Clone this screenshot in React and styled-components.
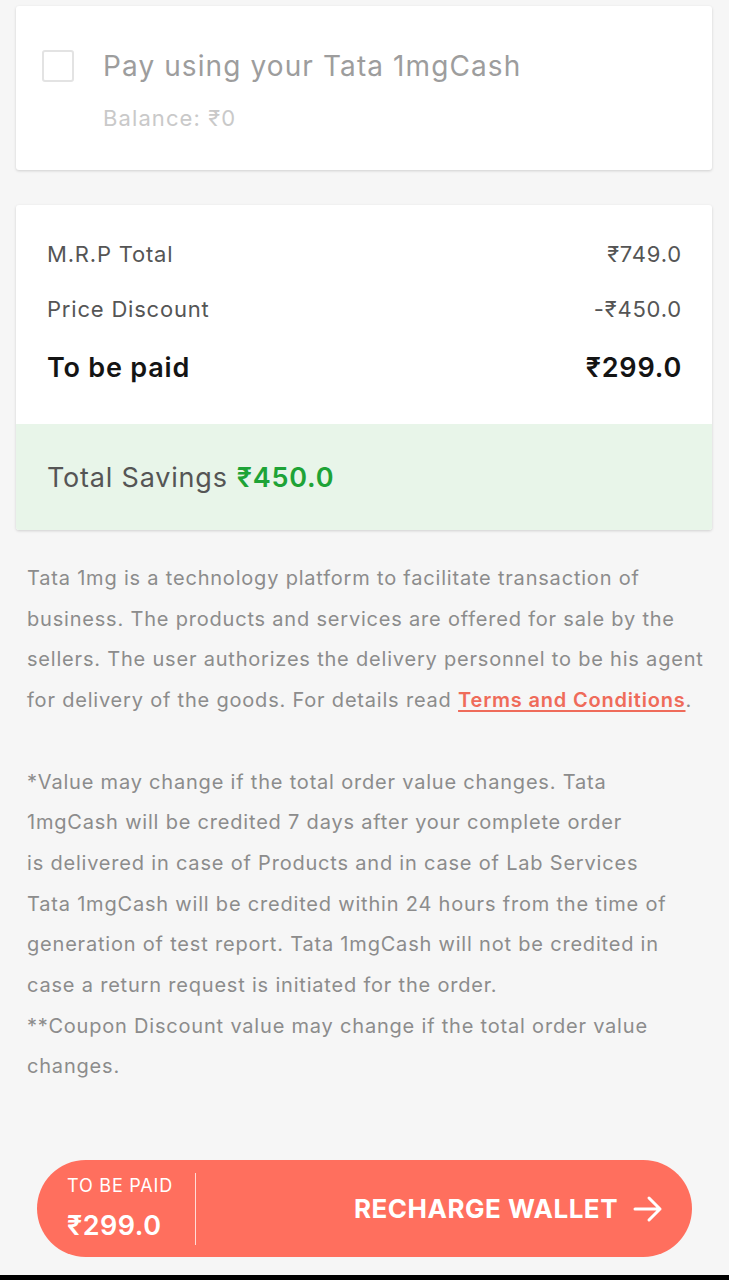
import React from 'react'
import styled, { createGlobalStyle } from 'styled-components'

const GlobalStyle = createGlobalStyle`
  body {
    margin: 0;
    background: #f6f6f6;
    font-family: Inter, "Noto Sans", "DejaVu Sans", sans-serif;
  }
`;

const Page = styled.div`
  height: 1280px;
  display: flex;
  flex-direction: column;
  padding: 6px 17px 0 16px;
  box-sizing: border-box;
  overflow: hidden;
`;

const Card = styled.div`
  background: #fff;
  border-radius: 3px;
  box-shadow: 0 1px 3px rgba(0, 0, 0, 0.16);
  overflow: hidden;
`;

const WalletCard = styled(Card)`
  height: 164px;
  box-sizing: border-box;
  display: flex;
  align-items: flex-start;
  padding: 44px 26px 0;
  gap: 29px;
`;

const Checkbox = styled.div`
  width: 28px;
  height: 28px;
  border: 2px solid #e3e3e3;
  border-radius: 3px;
  flex-shrink: 0;
`;

const WalletText = styled.div`
  display: flex;
  flex-direction: column;
  gap: 22px;
`;

const WalletTitle = styled.div`
  font-size: 28px;
  letter-spacing: 1.1px;
  color: #9d9d9d;
  line-height: 32px;
`;

const Balance = styled.div`
  font-size: 22px;
  letter-spacing: 1.1px;
  color: #c9c9c9;
  line-height: 28px;
`;

const SummaryCard = styled(Card)`
  margin-top: 35px;
`;

const Rows = styled.div`
  padding: 21px 30px 26px 31px;
  display: flex;
  flex-direction: column;
`;

const Row = styled.div`
  display: flex;
  justify-content: space-between;
  align-items: center;
  height: ${({ $strong }) => ($strong ? '62px' : '55px')};
  font-size: ${({ $strong }) => ($strong ? '27px' : '22px')};
  font-weight: ${({ $strong }) => ($strong ? 600 : 400)};
  letter-spacing: 0.8px;
  color: ${({ $strong }) => ($strong ? '#141414' : '#555')};
`;

const Savings = styled.div`
  background: #e8f5e9;
  height: 106px;
  display: flex;
  align-items: center;
  padding-left: 31px;
  font-size: 27px;
  letter-spacing: 0.8px;
  color: #555;
  gap: 9px;
`;

const SavingsAmount = styled.span`
  color: #1ea336;
  font-weight: 600;
`;

const Disclaimer = styled.div`
  margin: 28px 0 0 11px;
  font-size: 20px;
  letter-spacing: 0.8px;
  line-height: 40.7px;
  color: #8c8c8c;
  white-space: nowrap;
`;

const Paragraph = styled.p`
  margin: 0 0 40.7px;
`;

const TermsLink = styled.a`
  color: #ef6b5a;
  font-weight: 600;
  text-decoration: underline;
  text-underline-offset: 3px;
`;

const Footer = styled.div`
  margin-top: auto;
  padding: 0 20px 18px 21px;
`;

const PayButton = styled.button`
  width: 100%;
  height: 97px;
  border: none;
  border-radius: 49px;
  background: #ff6f5e;
  color: #fff;
  display: flex;
  align-items: center;
  padding: 0 28px 0 30px;
  font-family: inherit;
  cursor: pointer;
`;

const PaidBlock = styled.div`
  display: flex;
  flex-direction: column;
  align-items: flex-start;
  gap: 13px;
  padding-right: 22px;
  border-right: 1.5px solid rgba(255, 255, 255, 0.75);
  height: 72px;
  justify-content: center;
`;

const PaidLabel = styled.span`
  font-size: 18px;
  letter-spacing: 0.8px;
`;

const PaidAmount = styled.span`
  font-size: 27px;
  font-weight: 600;
  letter-spacing: 0.5px;
`;

const Action = styled.div`
  flex: 1;
  display: flex;
  justify-content: flex-end;
  align-items: center;
  gap: 14px;
  font-size: 26px;
  font-weight: 700;
  letter-spacing: 0.5px;
`;

const BottomBar = styled.div`
  height: 5px;
  background: #000;
  margin: 0 -17px 0 -16px;
`;

const ArrowIcon = () => (
  <svg width="32" height="28" viewBox="0 0 32 28" fill="none" stroke="#fff" strokeWidth="3" strokeLinecap="round" strokeLinejoin="round">
    <path d="M3 14h25M17 3l11 11-11 11" />
  </svg>
);

const firstPara = [
  'Tata 1mg is a technology platform to facilitate transaction of',
  'business. The products and services are offered for sale by the',
  'sellers. The user authorizes the delivery personnel to be his agent',
];

const secondPara = [
  '*Value may change if the total order value changes. Tata',
  '1mgCash will be credited 7 days after your complete order',
  'is delivered in case of Products and in case of Lab Services',
  'Tata 1mgCash will be credited within 24 hours from the time of',
  'generation of test report. Tata 1mgCash will not be credited in',
  'case a return request is initiated for the order.',
  '**Coupon Discount value may change if the total order value',
  'changes.',
];

const App = () => {
  return (
    <>
      <GlobalStyle />
      <Page>
        <WalletCard>
          <Checkbox />
          <WalletText>
            <WalletTitle>Pay using your Tata 1mgCash</WalletTitle>
            <Balance>Balance: ₹0</Balance>
          </WalletText>
        </WalletCard>

        <SummaryCard>
          <Rows>
            <Row><span>M.R.P Total</span><span>₹749.0</span></Row>
            <Row><span>Price Discount</span><span>-₹450.0</span></Row>
            <Row $strong><span>To be paid</span><span>₹299.0</span></Row>
          </Rows>
          <Savings>
            Total Savings <SavingsAmount>₹450.0</SavingsAmount>
          </Savings>
        </SummaryCard>

        <Disclaimer>
          <Paragraph>
            {firstPara.map((line) => (
              <div key={line}>{line}</div>
            ))}
            <div>
              for delivery of the goods. For details read <TermsLink href="#">Terms and Conditions</TermsLink>.
            </div>
          </Paragraph>
          <Paragraph>
            {secondPara.map((line) => (
              <div key={line}>{line}</div>
            ))}
          </Paragraph>
        </Disclaimer>

        <Footer>
          <PayButton>
            <PaidBlock>
              <PaidLabel>TO BE PAID</PaidLabel>
              <PaidAmount>₹299.0</PaidAmount>
            </PaidBlock>
            <Action>
              RECHARGE WALLET
              <ArrowIcon />
            </Action>
          </PayButton>
        </Footer>
        <BottomBar />
      </Page>
    </>
  )
}

export default App
